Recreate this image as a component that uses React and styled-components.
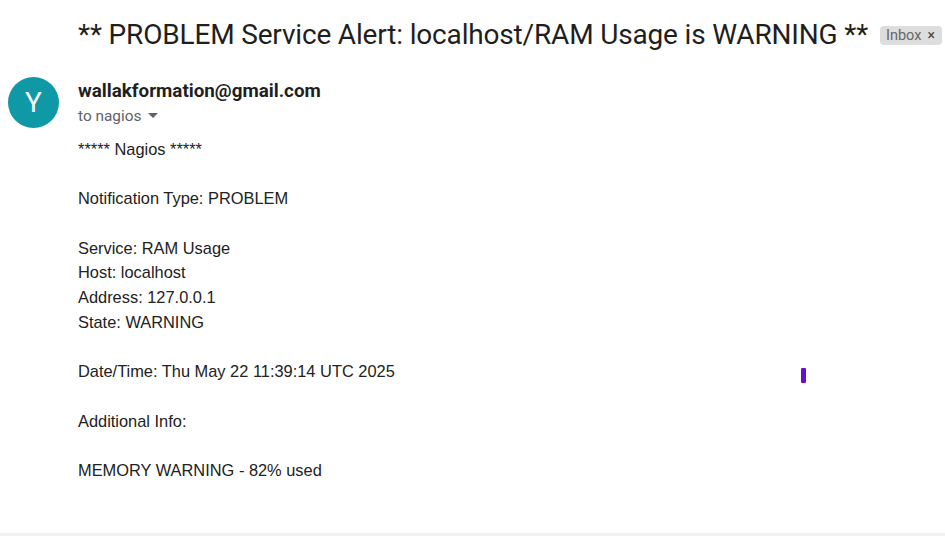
import styled, { createGlobalStyle } from 'styled-components'

const Global = createGlobalStyle`
  html, body {
    margin: 0;
    padding: 0;
    background: #fff;
  }
  body {
    font-family: Roboto, "Liberation Sans", Arial, sans-serif;
  }
`

const Page = styled.div`
  width: 945px;
  height: 536px;
  box-sizing: border-box;
  border-bottom: 3px solid #f1f1f1;
  position: relative;
  overflow: hidden;
`

const TitleRow = styled.div`
  display: flex;
  align-items: center;
  gap: 12px;
  padding: 14px 0 0 78px;
  height: 40px;
`

const Subject = styled.h1`
  margin: 0;
  font-family: Roboto, "Liberation Sans", sans-serif;
  font-weight: 400;
  font-size: 28px;
  color: #1f1f1f;
  white-space: nowrap;
  letter-spacing: -0.17px;
`

const Label = styled.span`
  display: inline-flex;
  align-items: center;
  gap: 6px;
  background: #dddddd;
  color: #666;
  font-size: 14.5px;
  border-radius: 4px;
  padding: 0 7px 0 6px;
  height: 19px;
  margin-top: 2px;
`

const Close = styled.span`
  font-size: 14px;
  color: #444;
`

const Header = styled.div`
  display: flex;
  align-items: flex-start;
  gap: 19px;
  height: 51px;
  padding: 23px 0 0 8px;
`

const Avatar = styled.div`
  width: 51px;
  height: 51px;
  border-radius: 50%;
  background: #0f98a6;
  color: #fff;
  display: flex;
  align-items: center;
  justify-content: center;
  font-size: 28px;
  font-family: Roboto, sans-serif;
`

const Meta = styled.div`
  display: flex;
  flex-direction: column;
  padding-top: 2px;
`

const Sender = styled.div`
  font-weight: 700;
  font-size: 18.8px;
  color: #1f1f1f;
  line-height: 24px;
`

const Recipient = styled.div`
  display: flex;
  align-items: center;
  gap: 7px;
  font-size: 15.4px;
  color: #5f6368;
  margin-top: 4px;
`

const Body = styled.div`
  padding: 9px 0 0 78px;
  font-family: "Liberation Sans", Arial, sans-serif;
  font-size: 16.4px;
  line-height: 24.7px;
  color: #222;
`

const Line = styled.div`
  min-height: 24.7px;
`

const Caret = styled.span`
  position: absolute;
  left: 801px;
  top: 368px;
  width: 5px;
  height: 15px;
  background: #6a0fd2;
  border-radius: 1px;
`

const lines = [
  '***** Nagios *****',
  '',
  'Notification Type: PROBLEM',
  '',
  'Service: RAM Usage',
  'Host: localhost',
  'Address: 127.0.0.1',
  'State: WARNING',
  '',
  'Date/Time: Thu May 22 11:39:14 UTC 2025',
  '',
  'Additional Info:',
  '',
  'MEMORY WARNING - 82% used',
]

export default function App() {
  return (
    <Page>
      <Global />
      <TitleRow>
        <Subject>** PROBLEM Service Alert: localhost/RAM Usage is WARNING **</Subject>
        <Label>
          Inbox <Close>×</Close>
        </Label>
      </TitleRow>
      <Header>
        <Avatar>Y</Avatar>
        <Meta>
          <Sender>wallakformation@gmail.com</Sender>
          <Recipient>
            to nagios
            <svg width="10" height="6" viewBox="0 0 10 6">
              <path d="M0 0h10L5 5z" fill="#5f6368" />
            </svg>
          </Recipient>
        </Meta>
      </Header>
      <Body>
        {lines.map((t, i) => (
          <Line key={i}>{t}</Line>
        ))}
      </Body>
      <Caret />
    </Page>
  )
}
